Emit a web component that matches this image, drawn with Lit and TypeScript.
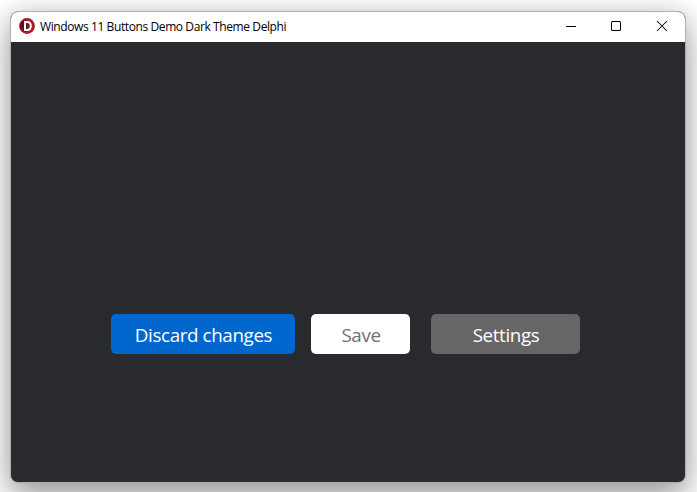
import { LitElement, html, css } from "lit";
import { customElement } from "lit/decorators.js";

@customElement("title-bar")
class TitleBar extends LitElement {
  static styles = css`
    :host { display: flex; align-items: center; height: 30px; background: #fff; color: #000; }
    .logo { width: 16px; height: 16px; margin: 0 5px 2px 8px; flex: none; }
    .title { flex: 1; font: 12px/16px "Open Sans", sans-serif; letter-spacing: -0.4px; white-space: nowrap; }
    .controls { display: flex; margin-right: 0.3px; }
    .control { width: 45.5px; height: 30px; display: flex; align-items: center; justify-content: center; }
    .control svg { width: 12px; height: 12px; margin-bottom: 2px; fill: none; stroke: #000; stroke-width: 1.05; }
  `;
  render() {
    return html`
      <svg class="logo" viewBox="0 0 16 16">
        <circle cx="8" cy="8" r="7.9" fill="#a71c29" />
        <circle cx="6.5" cy="8" r="5.4" fill="#570d16" />
        <path d="M1 5 5 1M1 9 9 1M2 12 12 2M4 14 14 4M7 15 15 7" stroke="#d02a3a" stroke-width=".6" opacity=".6" />
        <path d="M6 4H8Q11.8 4 11.8 8T8 12H6Z" fill="#821521" stroke="#fff" stroke-width="2" />
      </svg>
      <span class="title">Windows 11 Buttons Demo Dark Theme Delphi</span>
      <div class="controls">
        <div class="control"><svg viewBox="0 0 12 12"><path d="M1 6.5H11" /></svg></div>
        <div class="control"><svg viewBox="0 0 12 12"><rect x="1.5" y="1.5" width="9" height="9" rx="1" /></svg></div>
        <div class="control"><svg viewBox="0 0 12 12"><path d="M1 1 11 11M11 1 1 11" /></svg></div>
      </div>`;
  }
}

@customElement("app-root")
class AppRoot extends LitElement {
  static styles = css`
    :host { display: block; box-sizing: border-box; width: 697px; height: 492px; padding: 11px 11px 9px 10px; overflow: hidden; background: #fff; }
    .window { box-sizing: border-box; height: 472px; border: 1px solid #b0b0b0; border-radius: 8px; overflow: hidden; background: #292a2e; display: flex; flex-direction: column;
      box-shadow: 0 16px 32px rgba(0,0,0,.32), 0 0 24px rgba(0,0,0,.16); }
    .body { flex: 1; padding: 272px 0 0 100px; display: flex; align-items: flex-start; }
    .button { box-sizing: border-box; height: 40px; border: 0; border-radius: 5px; padding: 2px 0 0 1px; color: #fff; font: 18.8px/38px "Open Sans", sans-serif; letter-spacing: -0.38px; white-space: nowrap; text-align: center; }
    .discard { width: 184px; background: #0067ce; }
    .save { width: 99px; margin-left: 16px; background: #fff; color: #707070; }
    .settings { width: 149px; margin-left: 21px; background: #666; }
  `;
  render() {
    return html`
      <div class="window">
        <title-bar></title-bar>
        <div class="body">
          <button class="button discard">Discard changes</button>
          <button class="button save">Save</button>
          <button class="button settings">Settings</button>
        </div>
      </div>`;
  }
}
